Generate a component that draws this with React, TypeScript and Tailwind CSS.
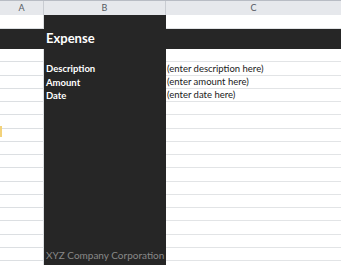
import React from 'react'

const ROW_HEIGHTS = [13, 14, 13, 13, 13, 14, 13, 13, 13, 14, 13, 13, 13, 14, 13, 13, 13]

const FONT = { fontFamily: 'Lato, "Open Sans", sans-serif' }

function ColumnHeader() {
    return (
        <div className="flex h-[15px] border-t border-[#b8bcc4] bg-[#e6e8ec] text-[9px] text-[#555a62]">
            <div className="flex w-[44px] items-center justify-center border-r border-[#c9ccd2]">A</div>
            <div className="flex w-[122px] items-center justify-center border-r border-[#c9ccd2]">B</div>
            <div className="flex flex-1 items-center justify-center">C</div>
        </div>
    )
}

function Row({ height, label, value, footer }: { height: number; label?: string; value?: string; footer?: string }) {
    return (
        <div className="flex" style={{ height }}>
            <div className="w-[44px] border-r border-b border-[#dcdfe2] bg-white" />
            <div className="flex w-[122px] items-center bg-[#262626] pl-[2px]">
                {label && <span className="text-[9.5px] font-bold leading-none text-white">{label}</span>}
                {footer && <span className="text-[10px] leading-none text-[#888888]">{footer}</span>}
            </div>
            <div className="flex flex-1 items-center border-b border-[#e2e4e6] bg-white pl-[1px]">
                {value && <span className="text-[9.5px] leading-none text-[#1a1a1a]">{value}</span>}
            </div>
        </div>
    )
}

export default function App() {
    const rows = ROW_HEIGHTS.map((h, i) => {
        if (i === 1) return <Row key={i} height={h} label="Description" value="(enter description here)" />
        if (i === 2) return <Row key={i} height={h} label="Amount" value="(enter amount here)" />
        if (i === 3) return <Row key={i} height={h} label="Date" value="(enter date here)" />
        if (i === 15) return <Row key={i} height={h} footer="XYZ Company Corporation" />
        return <Row key={i} height={h} />
    })

    return (
        <div className="relative h-[265px] w-[341px] overflow-hidden bg-white" style={FONT}>
            <ColumnHeader />
            <div className="flex h-[14px]">
                <div className="w-[44px] border-r border-b border-[#dcdfe2]" />
                <div className="w-[122px] bg-[#262626]" />
                <div className="flex-1 border-b border-[#e2e4e6]" />
            </div>
            <div className="flex h-[20px] items-center bg-[#262626]">
                <div className="w-[44px]" />
                <span className="pl-[2px] text-[13px] font-bold text-white">Expense</span>
            </div>
            {rows}
            {/* selected row marker on the left edge */}
            <div className="absolute left-0 top-[126px] h-[11px] w-[2px] bg-[#f3d27a]" />
        </div>
    )
}
